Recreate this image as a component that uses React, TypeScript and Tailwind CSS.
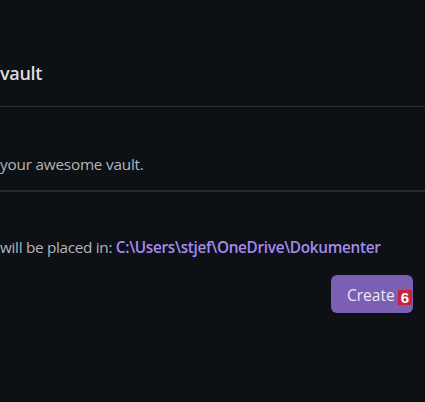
export default function App() {
  return (
    <div
      className="w-[425px] h-[402px] bg-[#0d1014] overflow-hidden flex flex-col"
      style={{ fontFamily: '"Open Sans", "Noto Sans", sans-serif' }}
    >
      {/* header */}
      <div className="h-[107px] pt-[61px] border-b border-[#2b2e33]">
        <h1 className="text-[18px] leading-[24px] font-semibold text-[#dcddde] tracking-[-0.3px]">vault</h1>
      </div>

      {/* description */}
      <div className="h-[85px] pt-[46px] border-b-2 border-[#26292e]">
        <p className="text-[15.3px] leading-[22px] text-[#b4b6ba] tracking-[-0.2px]">your awesome vault.</p>
      </div>

      {/* location */}
      <div className="pt-[44px] pr-[12px]">
        <p className="text-[15.3px] leading-[22px] text-[#b4b6ba] tracking-[-0.3px] whitespace-nowrap">
          will be placed in:{' '}
          <span className="font-semibold text-[#a58af0]">C:\Users\stjef\OneDrive\Dokumenter</span>
        </p>
        <div className="flex justify-end mt-[17px]">
          <button className="relative w-[82px] h-[38px] rounded-[6px] bg-[#7b5fb3] text-[15.5px] text-[#ece8f6] pl-[16px] pt-[3px] text-left">
            Create
            <span
              className="absolute left-[67px] top-[15px] w-[14px] h-[15px] bg-[#c8213a] text-white text-[15px] font-bold leading-[15px] text-center"
              style={{ fontFamily: '"Liberation Sans", Arial, sans-serif' }}
            >
              6
            </span>
          </button>
        </div>
      </div>
    </div>
  );
}
